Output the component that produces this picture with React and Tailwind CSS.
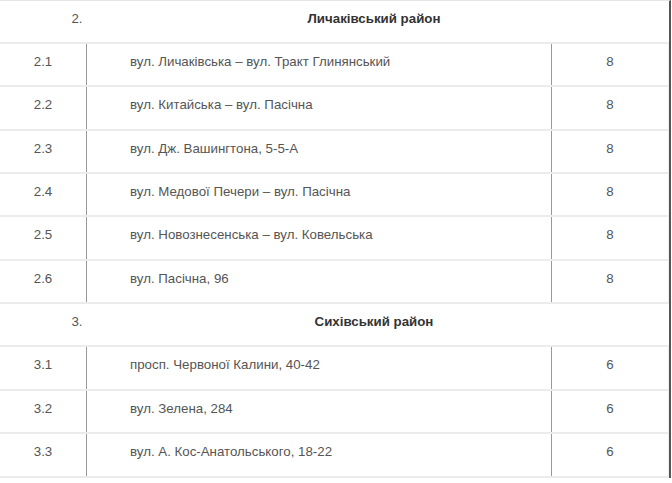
import React from 'react';

const sections = [
  {
    num: '2.',
    title: 'Личаківський район',
    rows: [
      ['2.1', 'вул. Личаківська – вул. Тракт Глинянський', '8'],
      ['2.2', 'вул. Китайська – вул. Пасічна', '8'],
      ['2.3', 'вул. Дж. Вашингтона, 5-5-А', '8'],
      ['2.4', 'вул. Медової Печери – вул. Пасічна', '8'],
      ['2.5', 'вул. Новознесенська – вул. Ковельська', '8'],
      ['2.6', 'вул. Пасічна, 96', '8'],
    ],
  },
  {
    num: '3.',
    title: 'Сихівський район',
    rows: [
      ['3.1', 'просп. Червоної Калини, 40-42', '6'],
      ['3.2', 'вул. Зелена, 284', '6'],
      ['3.3', 'вул. А. Кос-Анатольського, 18-22', '6'],
    ],
  },
];

// row heights so the borders land on the same lines as the source page
const heights = ['h-[43px]', 'h-[43px]', 'h-[44px]', 'h-[43px]', 'h-[43px]', 'h-[44px]', 'h-[43px]', 'h-[43px]', 'h-[44px]', 'h-[43px]', 'h-[44px]'];

const App = () => {
  let i = 0;
  return (
    <div className="w-[672px] h-[483px] bg-white overflow-hidden font-['Liberation_Sans',Arial,sans-serif] text-[13.3px] text-[#555]">
      <div className="w-[671px] border-r-2 border-[#555] border-t border-t-[#e6e6e6]">
        {sections.map((s) => (
          <React.Fragment key={s.num}>
            <div className={`flex items-center pb-[6px] border-b-2 border-[#ececec] ${heights[i++]}`}>
              <div className="w-[154px] text-center">{s.num}</div>
              <div className="w-[440px] text-center font-bold text-[#333]">{s.title}</div>
            </div>
            {s.rows.map((r) => (
              <div key={r[0]} className={`flex border-b-2 border-[#ececec] ${heights[i++]}`}>
                <div className="w-[87px] flex items-center justify-center pb-[6px] border-r border-[#999]">{r[0]}</div>
                <div className="w-[465px] flex items-center pl-[43px] pb-[6px] border-r border-[#999]">{r[1]}</div>
                <div className="flex-1 flex items-center justify-center pb-[6px] border-r border-[#eee]">{r[2]}</div>
              </div>
            ))}
          </React.Fragment>
        ))}
      </div>
    </div>
  );
};

export default App;
